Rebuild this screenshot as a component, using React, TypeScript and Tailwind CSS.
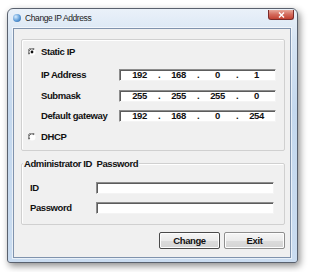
import React from 'react'

const font = { fontFamily: "'Liberation Sans', Arial, sans-serif" }

function Radio({ on }: { on?: boolean }) {
  return (
    <svg width="8" height="8" viewBox="0 0 8 8" className="shrink-0">
      <circle cx="4" cy="4" r="3.5" fill="#fff" />
      <path d="M1 6.5 A3.5 3.5 0 0 1 6.5 1" fill="none" stroke="#7a7a7a" strokeWidth="1" />
      <path d="M1.8 6 A2.7 2.7 0 0 1 6 1.8" fill="none" stroke="#404040" strokeWidth="0.8" />
      {on && <circle cx="4" cy="4" r="1.4" fill="#111" />}
    </svg>
  )
}

function Field({ className = '', children }: { className?: string; children?: React.ReactNode }) {
  return (
    <div className={`h-[12px] bg-white border-t border-l border-b border-r border-t-[#8c8c8c] border-l-[#8c8c8c] border-b-[#f4f4f4] border-r-[#f4f4f4] shadow-[inset_1px_1px_0_#5c5c5c] flex items-center ${className}`}>
      {children}
    </div>
  )
}

function IpField({ parts }: { parts: string[] }) {
  return (
    <Field className="w-[157px] pl-[1px]">
      {parts.map((p, i) => (
        <React.Fragment key={i}>
          {i > 0 && <span className="w-[2px] text-center leading-none">.</span>}
          <span className="w-[37px] text-center leading-none">{p}</span>
        </React.Fragment>
      ))}
    </Field>
  )
}

function IpRow({ label, parts, className = '' }: { label: string; parts: string[]; className?: string }) {
  return (
    <div className={`flex items-center h-[12px] ${className}`}>
      <span className="ml-[19px] w-[78px] leading-none">{label}</span>
      <IpField parts={parts} />
    </div>
  )
}

export default function App() {
  return (
    <div className="w-[310px] h-[272px] bg-white pt-[8px] pl-[7px] overflow-hidden">
      <div className="w-[291px] h-[255px] rounded-t-[6px] rounded-b-[3px] border border-[#59616e] bg-[linear-gradient(180deg,#eaf1f9_0%,#d6e4f3_12%,#c4d8ee_40%,#cadcf0_100%)] shadow-[2px_3px_7px_rgba(0,0,0,0.45)] flex flex-col">
        <div className="h-[19px] flex items-start shrink-0">
          <div className="mt-[5px] ml-[5px] w-[8px] h-[8px] rounded-full bg-[radial-gradient(circle_at_35%_35%,#d6ecff_0%,#5c9ad6_55%,#2a5d9c_100%)] shadow-[0_0_1px_#fff]" />
          <span className="ml-[4px] mt-[4px] text-[8.5px] leading-[10px] tracking-[-0.4px] text-[#1a1a1a]" style={font}>Change IP Address</span>
          <div className="ml-auto mr-[3px] mt-[1px] w-[26px] h-[10px] rounded-b-[3px] border border-[#7a2a2a] border-t-0 bg-[linear-gradient(180deg,#e8a89a_0%,#d46a5c_50%,#c24232_100%)] flex items-center justify-center">
            <svg width="7" height="6" viewBox="0 0 7 6">
              <path d="M1 0.5 L6 5.5 M6 0.5 L1 5.5" stroke="#fff" strokeWidth="1.4" />
            </svg>
          </div>
        </div>
        <div className="ml-[5px] w-[278px] h-[230px] border border-[#8093ad] bg-[#f0f0f0] shadow-[0_0_0_1px_rgba(255,255,255,0.6)] flex flex-col text-[9.5px] font-bold tracking-[-0.4px] text-[#111]" style={font}>
          <div className="ml-[7px] mt-[10px] w-[264px] h-[112px] border border-[#d0d0d0] rounded-[2px] shadow-[inset_1px_1px_0_#fff] flex flex-col shrink-0">
            <div className="mt-[6px] h-[12px] flex items-center">
              <span className="ml-[6px]"><Radio on /></span>
              <span className="ml-[5px] leading-none">Static IP</span>
            </div>
            <IpRow className="mt-[11px]" label="IP Address" parts={['192', '168', '0', '1']} />
            <IpRow className="mt-[9px]" label="Submask" parts={['255', '255', '255', '0']} />
            <IpRow className="mt-[8px]" label="Default gateway" parts={['192', '168', '0', '254']} />
            <div className="mt-[9px] h-[12px] flex items-center">
              <span className="ml-[6px]"><Radio /></span>
              <span className="ml-[5px] leading-none">DHCP</span>
            </div>
          </div>
          <div className="relative ml-[7px] mt-[12px] w-[264px] h-[62px] border border-[#d0d0d0] rounded-[2px] shadow-[inset_1px_1px_0_#fff] flex flex-col shrink-0">
            <span className="absolute left-[1px] top-[-6px] px-[1px] bg-[#f0f0f0] leading-[11px]">Administrator ID&nbsp;&nbsp;Password</span>
            <div className="mt-[18px] h-[12px] flex items-center">
              <span className="ml-[8px] w-[66px] leading-none">ID</span>
              <Field className="w-[178px]" />
            </div>
            <div className="mt-[8px] h-[12px] flex items-center">
              <span className="ml-[8px] w-[66px] leading-none">Password</span>
              <Field className="w-[178px]" />
            </div>
          </div>
          <div className="mt-[7px] flex justify-end gap-[4px] pr-[5px]">
            <button className="w-[61px] h-[17px] rounded-[2px] border border-[#4a4a4a] shadow-[inset_0_0_0_1px_#fdfdfd] bg-[linear-gradient(180deg,#f6f6f6_0%,#ebebeb_50%,#dcdcdc_51%,#d4d4d4_100%)] leading-none">Change</button>
            <button className="w-[61px] h-[17px] rounded-[2px] border border-[#8e8e8e] shadow-[inset_0_0_0_1px_#fdfdfd] bg-[linear-gradient(180deg,#f6f6f6_0%,#ebebeb_50%,#dcdcdc_51%,#d4d4d4_100%)] leading-none">Exit</button>
          </div>
        </div>
      </div>
    </div>
  )
}
